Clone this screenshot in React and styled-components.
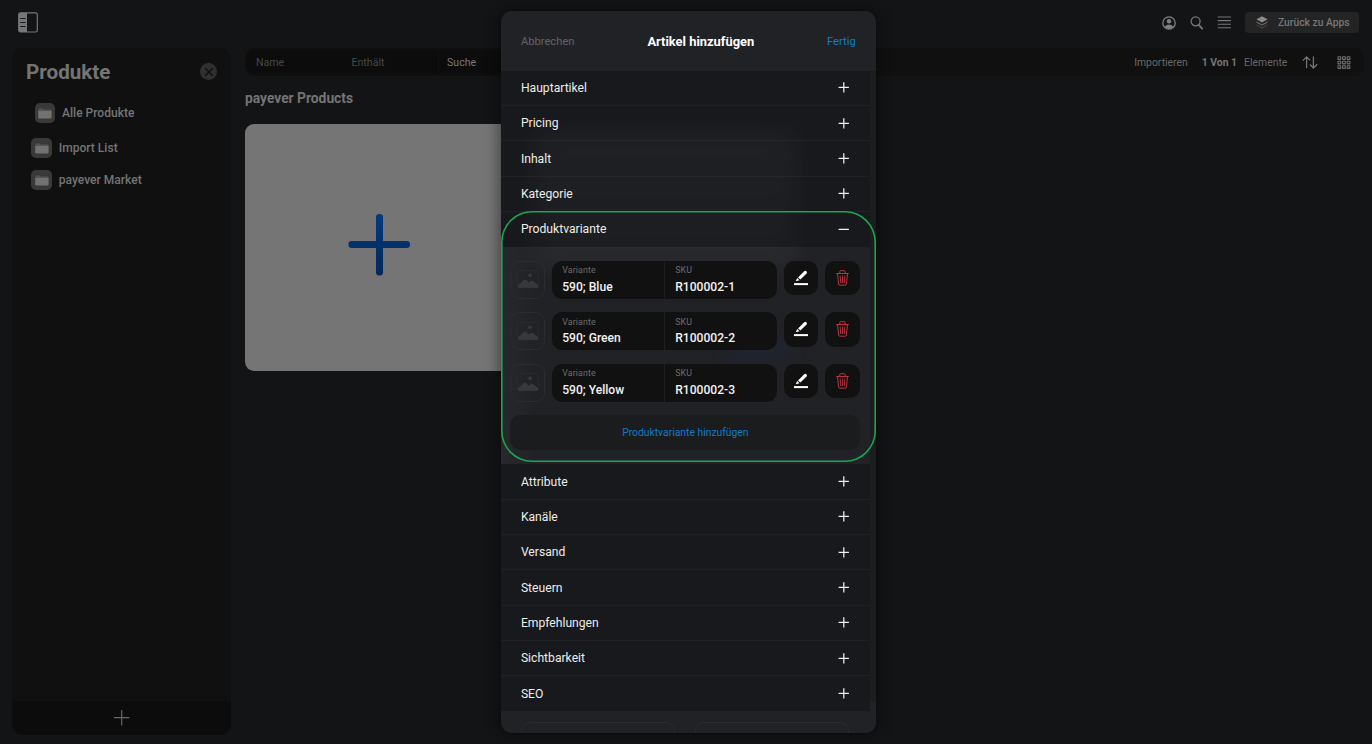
import React from 'react';
import styled, { createGlobalStyle } from 'styled-components';

const folders = [
    { name: 'Alle Produkte', nested: true },
    { name: 'Import List' },
    { name: 'payever Market' },
];

const sectionsBefore = ['Hauptartikel', 'Pricing', 'Inhalt', 'Kategorie'];
const sectionsAfter = ['Attribute', 'Kanäle', 'Versand', 'Steuern', 'Empfehlungen', 'Sichtbarkeit', 'SEO'];

const variants = [
    { name: '590; Blue', sku: 'R100002-1' },
    { name: '590; Green', sku: 'R100002-2' },
    { name: '590; Yellow', sku: 'R100002-3' },
];

export default function App() {
    return (
        <Page>
            <GlobalStyle />
            <TopBar />
            <Main>
                <Sidebar />
                <Products />
            </Main>
            <ArticleModal />
        </Page>
    );
}

function TopBar() {
    return (
        <TopBarWrapper>
            <PanelIcon />
            <TopActions>
                <UserIcon />
                <SearchIcon />
                <MenuIcon />
                <BackButton>
                    <LayersIcon />
                    Zurück zu Apps
                </BackButton>
            </TopActions>
        </TopBarWrapper>
    );
}

function Sidebar() {
    return (
        <SidebarWrapper>
            <SidebarHeader>
                <SidebarTitle>Produkte</SidebarTitle>
                <CloseButton>
                    <svg width="10" height="10" viewBox="0 0 10 10" stroke="#0f0f0f" strokeWidth="1.5">
                        <path d="M1.2 1.2 8.8 8.8M8.8 1.2 1.2 8.8" />
                    </svg>
                </CloseButton>
            </SidebarHeader>
            <FolderList>
                {folders.map(folder =>
                    <Folder key={folder.name} $nested={folder.nested}>
                        <FolderBadge><FolderIcon /></FolderBadge>
                        {folder.name}
                    </Folder>
                )}
            </FolderList>
            <SidebarFooter>
                <svg width="16" height="16" viewBox="0 0 16 16" stroke="#686868" strokeWidth="1.2">
                    <path d="M7.7 0V15.4M0 7.7H15.4" />
                </svg>
            </SidebarFooter>
        </SidebarWrapper>
    );
}

function Products() {
    return (
        <ProductsWrapper>
            <Toolbar>
                <Filters>
                    <Filter $width="95.5px">Name</Filter>
                    <Filter $width="95.5px">Enthält</Filter>
                    <Filter $width="100px" $active>Suche</Filter>
                </Filters>
                <ToolbarRight>
                    <span>Importieren</span>
                    <Count>1 Von 1</Count>
                    <span>Elemente</span>
                    <SortIcon />
                    <GridIcon />
                </ToolbarRight>
            </Toolbar>
            <GroupTitle>payever Products</GroupTitle>
            <AddCard>
                <svg width="62" height="62" viewBox="0 0 62 62">
                    <defs>
                        <linearGradient id="plus" x1="0" y1="0" x2="0" y2="62" gradientUnits="userSpaceOnUse">
                            <stop offset="0" stopColor="#033a7c" />
                            <stop offset="1" stopColor="#03285a" />
                        </linearGradient>
                    </defs>
                    <rect x="28" y="0" width="7" height="61.6" rx="3.3" fill="url(#plus)" />
                    <rect x="0.4" y="27" width="61.6" height="7" rx="3.3" fill="url(#plus)" />
                </svg>
            </AddCard>
        </ProductsWrapper>
    );
}

function ArticleModal() {
    return (
        <Modal>
            <ModalHeader>
                <CancelLink>Abbrechen</CancelLink>
                <ModalTitle>Artikel hinzufügen</ModalTitle>
                <DoneLink>Fertig</DoneLink>
            </ModalHeader>
            <ModalBody>
                <Sections>
                    {sectionsBefore.map(name => <Section key={name} name={name} />)}
                    <Section name="Produktvariante" open />
                    <VariantPanel>
                        {variants.map(variant => <Variant key={variant.sku} {...variant} />)}
                        <AddVariant>Produktvariante hinzufügen</AddVariant>
                    </VariantPanel>
                    {sectionsAfter.map(name => <Section key={name} name={name} />)}
                    <BottomButtons>
                        <BottomButton />
                        <BottomButton />
                    </BottomButtons>
                </Sections>
                <ScrollTrack><ScrollThumb /></ScrollTrack>
            </ModalBody>
            <Highlight />
        </Modal>
    );
}

function Section({ name, open }) {
    return (
        <SectionRow $open={open}>
            {name}
            <svg width="11" height="11" viewBox="0 0 11 11" stroke="#f0f0f0" strokeWidth="1.25">
                <path d={open ? 'M0.6 5.4H10.9' : 'M5.8 0.3V10.6M0.6 5.4H10.9'} />
            </svg>
        </SectionRow>
    );
}

function Variant({ name, sku }) {
    return (
        <VariantRow>
            <Thumb><ImageIcon /></Thumb>
            <Fields>
                <Field>
                    <FieldLabel>Variante</FieldLabel>
                    <FieldValue>{name}</FieldValue>
                </Field>
                <Field>
                    <FieldLabel>SKU</FieldLabel>
                    <FieldValue>{sku}</FieldValue>
                </Field>
            </Fields>
            <IconButton><PencilIcon /></IconButton>
            <IconButton><TrashIcon /></IconButton>
        </VariantRow>
    );
}

/* icons */

const PanelIcon = () => (
    <svg width="20" height="21" viewBox="0 0 20 21">
        <rect x="0.7" y="0.8" width="18.6" height="19.2" rx="1.8" fill="none" stroke="#777" strokeWidth="1.2" />
        <path d="M1 2.5Q1 1 2.5 1H9V20H2.5Q1 20 1 18.5Z" fill="#777" />
        <path d="M2.2 6.5H7.6M2.2 10.5H7.6M2.2 14.5H7.6" stroke="#17181a" strokeWidth="1.2" />
    </svg>
);

const UserIcon = () => (
    <svg width="14" height="14" viewBox="0 0 14 14">
        <circle cx="7" cy="7" r="6.2" fill="none" stroke="#808080" strokeWidth="1.3" />
        <circle cx="7" cy="5.3" r="2.2" fill="#808080" />
        <path d="M2.6 10.9Q4.3 8.6 7 8.6T11.4 10.9Q9.6 13 7 13T2.6 10.9Z" fill="#808080" />
    </svg>
);

const SearchIcon = () => (
    <svg width="13" height="14" viewBox="0 0 13 14" fill="none" stroke="#777">
        <circle cx="5.6" cy="5.3" r="4.5" strokeWidth="1.3" />
        <path d="M8.8 8.8 12.1 12.6" strokeWidth="1.8" strokeLinecap="round" />
    </svg>
);

const MenuIcon = () => (
    <svg width="14" height="13" viewBox="0 0 14 13" stroke="#777" strokeWidth="1.1">
        <path d="M0.7 1H13.9M0.7 4.6H13.9M0.7 8.2H13.9M0.7 11.8H13.9" />
    </svg>
);

const LayersIcon = () => (
    <svg width="12" height="13" viewBox="0 0 12 13">
        <path d="M6 0.2 11.6 3.3 6 6.4 0.4 3.3Z" fill="#8a8a8a" />
        <path d="M0.5 6.1 6 9.1 11.5 6.1" fill="none" stroke="#666" strokeWidth="1.1" />
        <path d="M0.5 9 6 12 11.5 9" fill="none" stroke="#484848" strokeWidth="1" />
    </svg>
);

const FolderIcon = () => (
    <svg width="14" height="11" viewBox="0 0 14 11">
        <path d="M0.4 1.5Q0.4 0.4 1.5 0.4H4.3L5.6 1.5H12.5Q13.4 1.5 13.4 2.5V4H0.4Z" fill="#555" />
        <path d="M0.2 3H13.6V9.6Q13.6 10.6 12.6 10.6H1.2Q0.2 10.6 0.2 9.6Z" fill="#727272" />
    </svg>
);

const SortIcon = () => (
    <svg width="16" height="13" viewBox="0 0 16 13" fill="none" stroke="#727272" strokeWidth="1.3">
        <path d="M4.6 12.3V1M0.8 4.6 4.6 0.9 8.1 4.4M11.4 0.5V11.9M8 8.5 11.4 12 15.2 8.3" />
    </svg>
);

const GridIcon = () => (
    <svg width="14" height="13" viewBox="0 0 14 13" fill="none" stroke="#6d6d6d" strokeWidth="1.1">
        {[0, 1, 2].map(row => [0, 1, 2].map(col =>
            <rect key={`${row}${col}`} x={1 + col * 4.6} y={0.7 + row * 4.5} width="2.7" height="2.7" rx="0.2" />
        ))}
    </svg>
);

const ImageIcon = () => (
    <svg width="22" height="19" viewBox="0 0 22 19">
        <rect x="0.6" y="0.6" width="20.6" height="17.2" rx="2" fill="none" stroke="#2b2c30" strokeWidth="1" />
        <path d="M1 17.8V15.6L6.8 10Q8 9 9.2 10L11.8 12.6 14 11Q15.3 10.2 16.5 11.2L21 15.3V17.8Z" fill="#37383c" />
        <circle cx="13.1" cy="5.3" r="1.9" fill="#37383c" />
    </svg>
);

const PencilIcon = () => (
    <svg width="14" height="16" viewBox="0 0 14 16">
        <path d="M4 7.4 10.2 1.2Q11.3 0.3 12.4 1.2 13.4 2.2 12.6 3.4L6.4 9.6Z" fill="#fff" />
        <path d="M3.2 8 5.5 10.3 1.7 11.2Z" fill="#fff" />
        <rect x="0" y="13.1" width="14" height="2" fill="#fff" />
    </svg>
);

const TrashIcon = () => (
    <svg width="13" height="16" viewBox="0 0 13 16" fill="none" stroke="#b9343e" strokeWidth="1">
        <path d="M0.2 3.5H12.8M3.8 3.3V1.7Q3.8 0.7 4.8 0.7H8.2Q9.2 0.7 9.2 1.7V3.3" />
        <path d="M1.5 3.7 2.6 14Q2.7 15.2 3.8 15.2H9.2Q10.3 15.2 10.4 14L11.5 3.7" />
        <path d="M4.2 5.5 4.7 13M6.5 5.5V13M8.8 5.5 8.3 13" strokeWidth="0.9" />
    </svg>
);

const GlobalStyle = createGlobalStyle`
    * {
        box-sizing: border-box;
    }
    body {
        margin: 0;
        background: #131416;
        font-family: Roboto, "Liberation Sans", sans-serif;
    }
    svg {
        display: block;
        flex-shrink: 0;
    }
`

const Page = styled.div`
    position: relative;
    height: 744px;
    overflow: hidden;
    background: #131416;
    color: #777;
`

const TopBarWrapper = styled.div`
    display: flex;
    align-items: center;
    justify-content: space-between;
    height: 45px;
    padding: 0 13px 0 18px;
`

const TopActions = styled.div`
    display: flex;
    align-items: center;
    gap: 14px;
`

const BackButton = styled.div`
    display: flex;
    align-items: center;
    gap: 10px;
    width: 114px;
    height: 21px;
    padding-left: 11px;
    border-radius: 4px;
    background: #242424;
    font-size: 10.3px;
    font-weight: 500;
    white-space: nowrap;
`

const Main = styled.div`
    display: flex;
    gap: 14px;
    padding: 3px 8px 0 12px;
`

const SidebarWrapper = styled.div`
    display: flex;
    flex-direction: column;
    width: 219px;
    height: 687px;
    border-radius: 11px;
    background: #101010;
    overflow: hidden;
`

const SidebarHeader = styled.div`
    display: flex;
    align-items: center;
    justify-content: space-between;
    height: 47px;
    padding: 0 14px;
`

const SidebarTitle = styled.div`
    font-size: 20.6px;
    font-weight: 700;
    color: #747474;
`

const CloseButton = styled.div`
    display: flex;
    align-items: center;
    justify-content: center;
    width: 17px;
    height: 17px;
    border-radius: 50%;
    background: #303030;
`

const FolderList = styled.div`
    flex: 1;
    padding-top: 8px;
`

const Folder = styled.div`
    display: flex;
    align-items: center;
    gap: 7px;
    height: 20px;
    margin: ${props => props.$nested ? '0 0 15px 22.5px' : '0 0 12.2px 19.3px'};
    font-size: 12.05px;
    font-weight: 500;
    color: #747474;
`

const FolderBadge = styled.div`
    display: flex;
    align-items: center;
    justify-content: center;
    width: 20.5px;
    height: 20.5px;
    border-radius: 5px;
    background: #393939;
`

const SidebarFooter = styled.div`
    display: flex;
    align-items: center;
    justify-content: center;
    height: 34px;
    background: #0c0c0c;
`

const ProductsWrapper = styled.div`
    flex: 1;
    min-width: 0;
`

const Toolbar = styled.div`
    display: flex;
    align-items: center;
    justify-content: space-between;
    height: 28px;
    padding: 0 13px 0 2px;
    border-radius: 10px;
    background: #101010;
    font-size: 10.4px;
`

const Filters = styled.div`
    display: flex;
    height: 22px;
    border-radius: 7px;
    background: #0b0c0b;
    box-shadow: 0 0 3px #0b0c0b;
    font-size: 10.6px;
`

const Filter = styled.div`
    display: flex;
    align-items: center;
    width: ${props => props.$width};
    padding-left: 8px;
    border-left: 1px solid ${props => props.$active ? '#111211' : 'transparent'};
    color: ${props => props.$active ? '#777' : '#484949'};
`

const ToolbarRight = styled.div`
    display: flex;
    align-items: center;
    gap: 7px;
    color: #686868;

    & > svg {
        margin-left: 7.7px;
    }

    & > svg:last-child {
        margin-left: 12px;
    }
`

const Count = styled.span`
    margin-left: 7px;
    font-weight: 700;
    color: #747474;
`

const GroupTitle = styled.div`
    height: 47.5px;
    line-height: 45.4px;
    font-size: 13.8px;
    font-weight: 700;
    color: #747474;
`

const AddCard = styled.div`
    display: flex;
    align-items: center;
    justify-content: center;
    width: 268.6px;
    height: 247.5px;
    padding-bottom: 5px;
    border-radius: 9px;
    background: #757575;
`

const Modal = styled.div`
    position: absolute;
    top: 11px;
    left: 500.6px;
    width: 375.4px;
    height: 722px;
    border-radius: 11px;
    background: #212226;
    box-shadow: 0 0 14px 2px rgba(0, 0, 0, 0.45);
`

const ModalHeader = styled.div`
    display: grid;
    grid-template-columns: 1fr auto 1fr;
    align-items: center;
    height: 59.7px;
    padding: 1px 20.3px 0;
    font-size: 11.2px;
`

const CancelLink = styled.div`
    color: #616266;
`

const ModalTitle = styled.div`
    padding-left: 25px;
    font-size: 12.9px;
    font-weight: 700;
    color: #fff;
`

const DoneLink = styled.div`
    text-align: right;
    color: #127bc8;
`

const ModalBody = styled.div`
    position: relative;
    display: flex;
    height: 662.3px;
    border-radius: 0 0 11px 11px;
    overflow: hidden;

    /* light of the cards behind the sheet */
    &::before {
        content: '';
        position: absolute;
        top: 58px;
        left: 30px;
        width: 268px;
        height: 140px;
        border-radius: 14px;
        background: linear-gradient(rgba(255, 255, 255, 0.06), rgba(255, 255, 255, 0.03));
        filter: blur(11px);
    }

    &::after {
        content: '';
        position: absolute;
        top: 268px;
        left: 226px;
        width: 62px;
        height: 22px;
        background: rgba(20, 50, 100, 0.16);
        filter: blur(8px);
    }
`

const Sections = styled.div`
    position: relative;
    z-index: 1;
    flex: 1;
`

const SectionRow = styled.div`
    display: flex;
    align-items: center;
    justify-content: space-between;
    height: 35.35px;
    padding: 0 20.3px;
    border-bottom: 1px solid ${props => props.$open ? 'transparent' : 'rgba(255, 255, 255, 0.035)'};
    background: rgba(8, 10, 14, 0.38);
    font-size: 12.15px;
    color: #ececec;
`

const VariantPanel = styled.div`
    height: 217px;
    padding: 13.1px 9.5px 0 9.9px;
    background: linear-gradient(90deg, rgba(255, 255, 255, 0.03), transparent 35px);
`

const VariantRow = styled.div`
    display: flex;
    align-items: flex-start;
    gap: 6.9px;
    height: 38px;
    margin-bottom: 13.6px;
`

const Thumb = styled.div`
    display: flex;
    align-items: center;
    justify-content: center;
    width: 34.5px;
    height: 38px;
    border: 1px solid #2b2c30;
    border-radius: 9px;
`

const Fields = styled.div`
    display: flex;
    width: 225px;
    height: 38px;
    border-radius: 10px;
    background: #111112;
`

const Field = styled.div`
    flex: 1;
    padding: 3.7px 0 0 10.3px;

    & + & {
        border-left: 1px solid #1e1f21;
    }
`

const FieldLabel = styled.div`
    line-height: 12.4px;
    font-size: 8.8px;
    letter-spacing: 0.15px;
    color: #6c6c6d;
`

const FieldValue = styled.div`
    line-height: 20.6px;
    font-size: 12.1px;
    font-weight: 500;
    color: #f2f2f2;
`

const IconButton = styled.div`
    display: flex;
    align-items: center;
    justify-content: center;
    width: 34.5px;
    height: 34.5px;
    border-radius: 10px;
    background: #111112;
`

const AddVariant = styled.div`
    height: 35px;
    border-radius: 10px;
    background: #1b1c1e;
    line-height: 35px;
    text-align: center;
    font-size: 10.35px;
    color: #127bc8;
`

const BottomButtons = styled.div`
    display: flex;
    gap: 20px;
    padding: 10px 20.3px 0;
`

const BottomButton = styled.div`
    flex: 1;
    height: 35px;
    border: 1px solid #2a2b2e;
    border-radius: 9px;
`

const ScrollTrack = styled.div`
    width: 6.3px;
    background: #212226;
`

const ScrollThumb = styled.div`
    height: 631px;
    border-radius: 0 0 3px 3px;
    background: #1c1d1f;
`

/* outline drawn over the open section */
const Highlight = styled.div`
    position: absolute;
    z-index: 2;
    top: 200px;
    left: 0.9px;
    width: 374.5px;
    height: 250.6px;
    border-radius: 31px;
    box-shadow: inset 0 0 0 1.6px #1da453;
    pointer-events: none;
`
